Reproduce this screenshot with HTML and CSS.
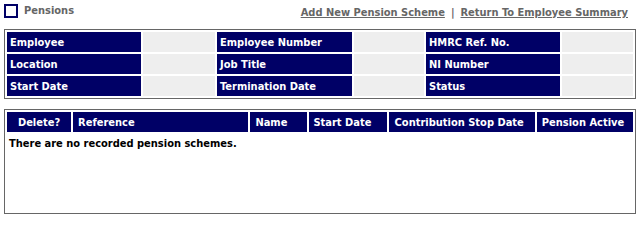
FILE: index.html
```html
<!DOCTYPE html>
<html>
<head>
<meta charset="utf-8">
<link rel="stylesheet" href="styles.css">
</head>
<body>
<div class="topbar">
  <div class="title"><span class="box"></span><span class="title-text">Pensions</span></div>
  <div class="links"><a href="#">Add New Pension Scheme</a><span class="sep">|</span><a href="#">Return To Employee Summary</a></div>
</div>
<div class="panel">
  <table class="info">
    <tr><th class="c1">Employee</th><td class="v1"></td><th class="c2">Employee Number</th><td class="v2"></td><th class="c3">HMRC Ref. No.</th><td class="v3"></td></tr>
    <tr><th>Location</th><td></td><th>Job Title</th><td></td><th>NI Number</th><td></td></tr>
    <tr><th>Start Date</th><td></td><th>Termination Date</th><td></td><th>Status</th><td></td></tr>
  </table>
</div>
<div class="panel list">
  <table class="schemes">
    <tr>
      <th class="h-del">Delete?</th>
      <th class="h-ref">Reference</th>
      <th class="h-name">Name</th>
      <th class="h-start">Start Date</th>
      <th class="h-stop">Contribution Stop Date</th>
      <th class="h-act">Pension Active</th>
    </tr>
    <tr><td colspan="6" class="empty">There are no recorded pension schemes.</td></tr>
  </table>
</div>
</body>
</html>
```
FILE: styles.css
```css
html, body {
  margin: 0;
  padding: 0;
  background: #ffffff;
}
body {
  font-family: "DejaVu Sans Condensed", "DejaVu Sans", sans-serif;
  font-size: 11px;
  font-weight: bold;
  color: #000000;
  width: 638px;
}
.topbar {
  display: flex;
  justify-content: space-between;
  height: 29px;
  padding: 0 10px 0 4px;
}
.title {
  display: flex;
  align-items: flex-start;
  padding-top: 4px;
}
.box {
  width: 10px;
  height: 10px;
  border: 2px solid #000066;
  display: inline-block;
}
.title-text {
  color: #666666;
  margin-left: 6px;
  line-height: 13px;
}
.links {
  padding-top: 6px;
  color: #666666;
  line-height: 13px;
}
.links a {
  color: #666666;
  text-decoration: underline;
}
.sep {
  margin: 0 6px;
}
.panel {
  margin: 0 2px 0 4px;
  border: 1px solid #666666;
  width: 630px;
}
.panel.list {
  margin-top: 10px;
  height: 103px;
}
table {
  border-collapse: separate;
  border-spacing: 2px;
  width: 100%;
  table-layout: fixed;
}
th, td {
  padding: 0 3px;
  height: 20px;
  text-align: left;
  white-space: nowrap;
  overflow: hidden;
}
.info th {
  background: #000066;
  color: #ffffff;
}
.info td {
  background: #eeeeee;
}
.info .c1 { width: 128px; }
.info .v1 { width: 66px; }
.info .c2 { width: 129px; }
.info .v2 { width: 64px; }
.info .c3 { width: 128px; }
.info .v3 { width: 65px; }
.schemes th {
  background: #000066;
  color: #ffffff;
  padding: 0 5px;
}
.schemes .h-del { width: 54px; text-align: center; }
.schemes .h-ref { width: 165px; }
.schemes .h-name { width: 47px; }
.schemes .h-start { width: 68px; padding-left: 4px; }
.schemes .h-stop { width: 135px; padding-left: 6px; }
.schemes .h-act { width: 86px; }
.schemes td.empty {
  padding: 0 2px 2px;
  height: 18px;
}
```
